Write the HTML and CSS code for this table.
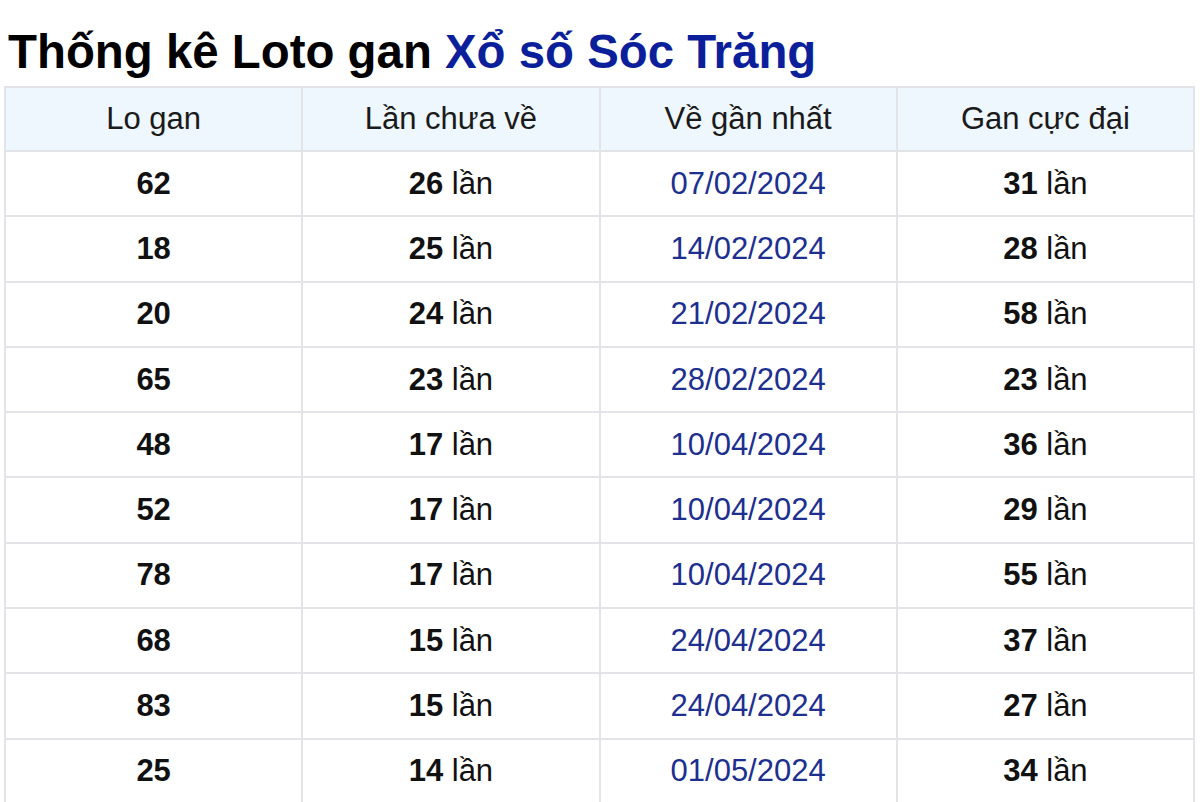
FILE: index.html
```html
<!DOCTYPE html>
<html lang="vi">
<head>
<meta charset="utf-8">
<title>Thống kê Loto gan Xổ số Sóc Trăng</title>
<link rel="stylesheet" href="styles.css">
</head>
<body>
<h1 class="title">Thống kê Loto gan <a class="title-link" href="#">Xổ số Sóc Trăng</a></h1>
<table class="gan-table">
  <thead>
    <tr><th>Lo gan</th><th>Lần chưa về</th><th>Về gần nhất</th><th>Gan cực đại</th></tr>
  </thead>
  <tbody>
    <tr><td><b>62</b></td><td><b>26</b> lần</td><td class="date">07/02/2024</td><td><b>31</b> lần</td></tr>
    <tr><td><b>18</b></td><td><b>25</b> lần</td><td class="date">14/02/2024</td><td><b>28</b> lần</td></tr>
    <tr><td><b>20</b></td><td><b>24</b> lần</td><td class="date">21/02/2024</td><td><b>58</b> lần</td></tr>
    <tr><td><b>65</b></td><td><b>23</b> lần</td><td class="date">28/02/2024</td><td><b>23</b> lần</td></tr>
    <tr><td><b>48</b></td><td><b>17</b> lần</td><td class="date">10/04/2024</td><td><b>36</b> lần</td></tr>
    <tr><td><b>52</b></td><td><b>17</b> lần</td><td class="date">10/04/2024</td><td><b>29</b> lần</td></tr>
    <tr><td><b>78</b></td><td><b>17</b> lần</td><td class="date">10/04/2024</td><td><b>55</b> lần</td></tr>
    <tr><td><b>68</b></td><td><b>15</b> lần</td><td class="date">24/04/2024</td><td><b>37</b> lần</td></tr>
    <tr><td><b>83</b></td><td><b>15</b> lần</td><td class="date">24/04/2024</td><td><b>27</b> lần</td></tr>
    <tr><td><b>25</b></td><td><b>14</b> lần</td><td class="date">01/05/2024</td><td><b>34</b> lần</td></tr>
  </tbody>
</table>
</body>
</html>
```
FILE: styles.css
```css
html, body {
  margin: 0;
  padding: 0;
  background: #ffffff;
}
body {
  padding: 0 6px 0 4px;
  font-family: "Liberation Sans", Arial, sans-serif;
  color: #111;
}
.title {
  margin: 0;
  padding: 24px 0 6px 4px;
  font-size: 47.4px;
  line-height: 56px;
  font-weight: 700;
  color: #000;
}
.title-link {
  color: #0c1f9b;
  text-decoration: none;
}
.gan-table {
  width: 1191px;
  border-collapse: collapse;
  table-layout: fixed;
  font-size: 31px;
}
.gan-table th,
.gan-table td {
  border: 2px solid #e2e4e8;
  text-align: center;
  vertical-align: middle;
  padding: 0;
}
.gan-table th {
  height: 62px;
  background: #eef6fe;
  font-weight: 400;
  color: #1a1a1a;
}
.gan-table td {
  height: 63.3px;
  color: #111;
}
.gan-table b {
  font-weight: 700;
}
.gan-table .date {
  color: #1d2f8f;
}
```
